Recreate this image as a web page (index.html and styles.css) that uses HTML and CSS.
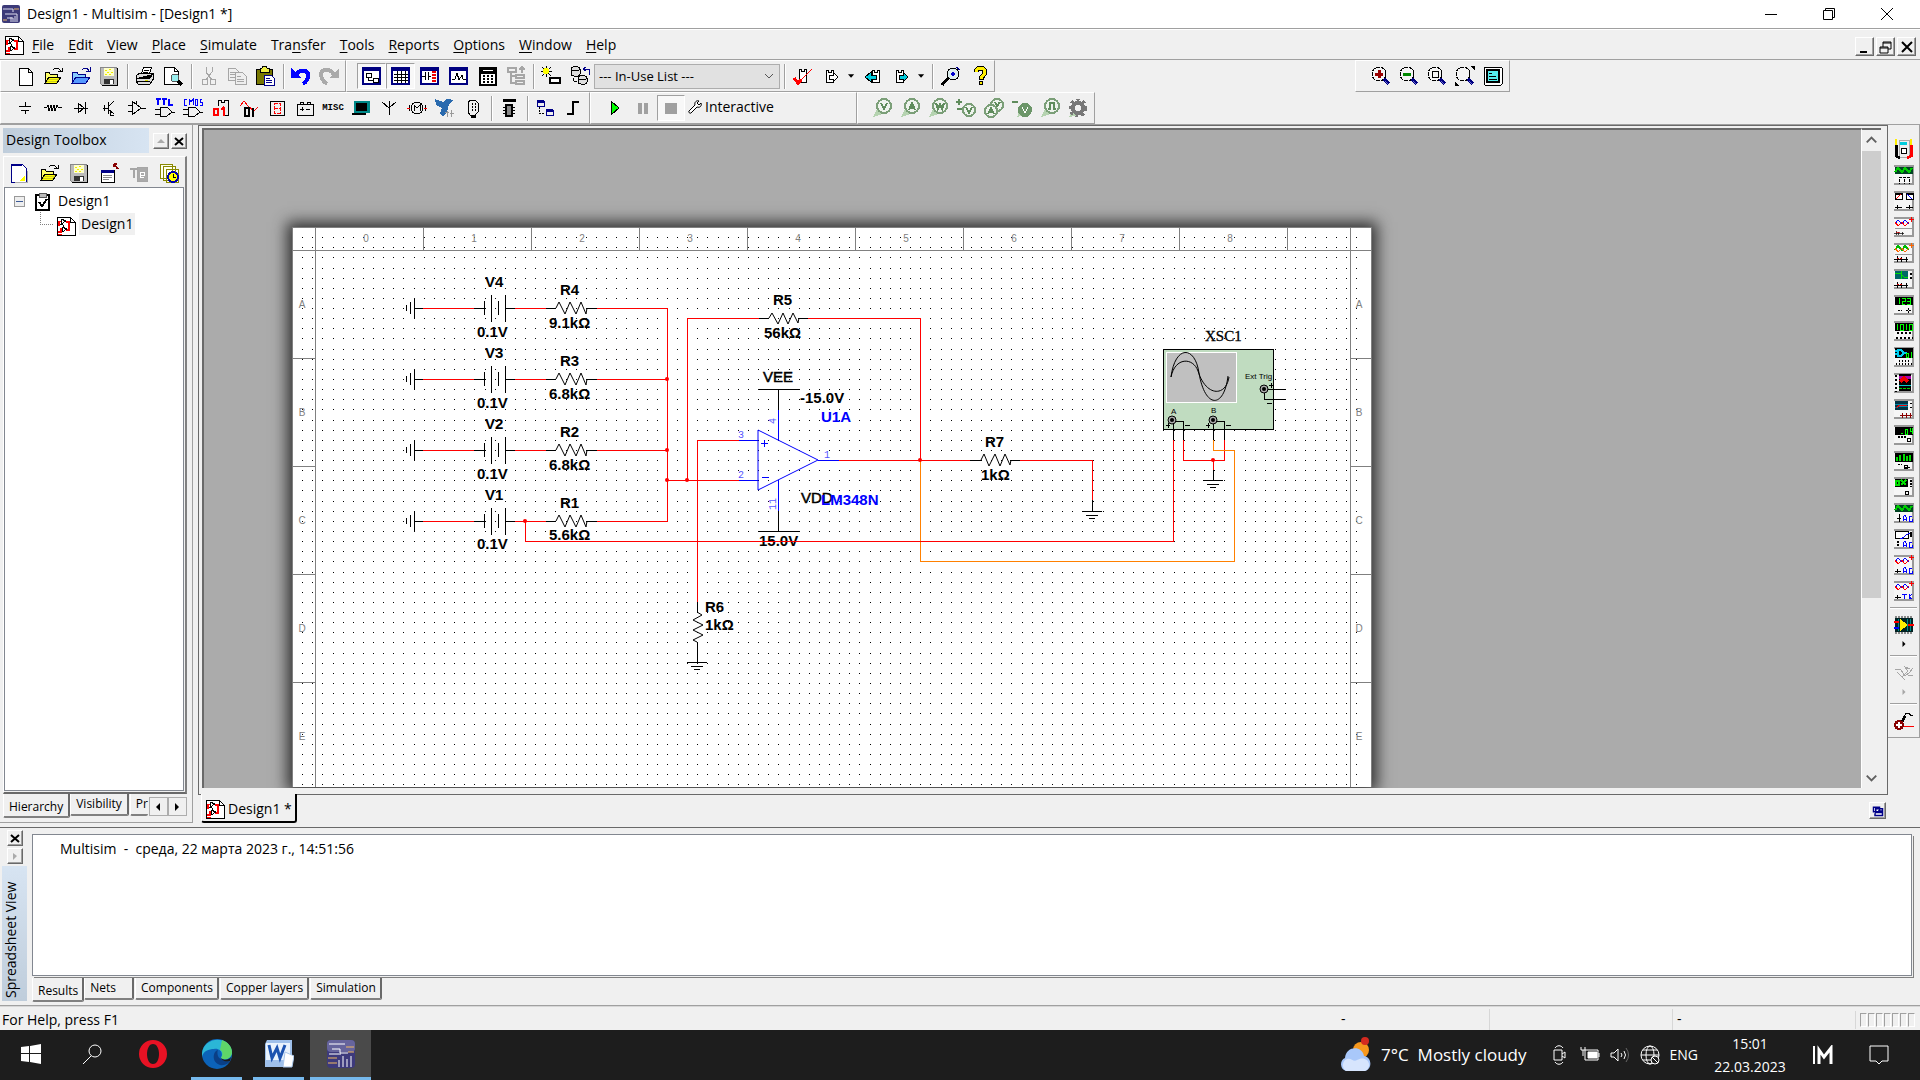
FILE: index.html
```html
<!DOCTYPE html>
<html lang="en">
<head>
    <meta charset="utf-8">
    <title>Design1 - Multisim - [Design1 *]</title>
    <meta name="viewport" content="width=device-width,initial-scale=1">
    <link rel="stylesheet" href="styles.css">
</head>
<body>
    <!-- shared symbols -->
    <svg class="defs" width="0" height="0">
        <defs>
            <symbol id="i-sheet" viewBox="0 0 20 20">
                <path d="M1 1h13l5 5v13H1z" fill="#fff" stroke="#000"/>
                <path d="M14 1v5h5" stroke="#000" fill="none"/>
                <path d="M3 5v5M2 16h3v-4M10 6h3v8h-3" stroke="#f00" fill="none" stroke-width="2"/>
                <path d="M2 5h4M2 18h4" stroke="#f00" fill="none"/>
                <path d="M5 3v5l5-3zM6 11v5l5-3zM4 8h3M7 9v2" stroke="#000" fill="none"/>
            </symbol>
            <symbol id="i-open" viewBox="0 0 20 20">
                <path d="M2 17V6h4l1 2h7v3" fill="#ff6" stroke="#000"/>
                <path d="M2 17l4-6h12l-4 6z" fill="#cc2" stroke="#000"/>
                <path d="M5 14h9M6 12h9M4 16h9" stroke="#ff0"/>
                <path d="M10 4l2-2h3l3 3M15 5h4V2" fill="none" stroke="#000"/>
            </symbol>
            <symbol id="i-save" viewBox="0 0 20 20">
                <path d="M1 1h16l1 2v16H3l-2-2z" fill="#bbb" stroke="#888"/>
                <path d="M18 2v17H3" stroke="#000" fill="none"/>
                <path d="M5 2h10v8H5z" fill="#ffc"/>
                <path d="M6 4h2M10 3h2M8 6h2M12 6h2M6 8h2M10 8h2" stroke="#ee0"/>
                <path d="M5 13h10v5H5z" fill="#333"/><path d="M11 14h3v4h-3z" fill="#fff"/>
            </symbol>
            <symbol id="i-lens" viewBox="0 0 20 20">
                <circle cx="8" cy="8" r="7" fill="#f4f4f4" stroke="#000" stroke-dasharray="4 1"/>
                <path d="M13 13l5 5" stroke="#000080" stroke-width="4"/><path d="M14 15l3 3" stroke="#66c"/>
            </symbol>
            <symbol id="i-probe" viewBox="0 0 20 20">
                <path d="M1 19l4-8 6 5z" fill="#b5d3b0"/>
                <circle cx="12" cy="8" r="7" fill="#eef3ed" stroke="#7b9f78" stroke-width="2"/>
            </symbol>
            <symbol id="i-chip" viewBox="0 0 20 20">
                <path d="M6 3h2v2h3V3h2v13H6z" fill="#fff" stroke="#000"/>
            </symbol>
            <symbol id="i-drop" viewBox="0 0 8 8"><path d="M0 2h7L3.500 6z"/></symbol>

            <!-- instrument faces -->
            <symbol id="m-base" viewBox="0 0 20 20">
                <path d="M0 0h20v20H0z" fill="#f6f6f6"/>
                <path d="M0 1h19v18H0" fill="none" stroke="#999" stroke-width="2"/>
            </symbol>
            <symbol id="m-pins" viewBox="0 0 20 6"><path d="M0 3h14M3 0v6M7 1v5M12 1v5" stroke="#000"/><path d="M3 2h2M6 2h2" stroke="#c00"/></symbol>

            <!-- schematic parts -->
            <g id="src">
                <path d="M-68-3v6M-64-6v12M-60-10v20M-60 0h9M0 0h10M10-7v14M17-13v27M24-7v14M31-13v27M31 0h10M72 0h10M112 0h11" class="blk"/>
                <path d="M-51 0H0M41 0h31M123 0h71" class="red"/>
                <path d="M82 0l3-6 6 12 5-12 6 12 5-12 5 12 1-6" class="blk thin"/>
            </g>
            <g id="gnd"><path d="M-10 0h20M-6 4h12M-3 7h6" class="blk"/></g>
            <g id="jack"><circle r="4" fill="#aaa" stroke="#000"/><circle r="2" fill="#000"/></g>
            <pattern id="grid" x="292" y="228" width="152" height="152" patternUnits="userSpaceOnUse">
                <path class="dots" d="M0 0.500h152M0 10.500h152M0 20.500h152M0 30.500h152M0 41.500h152M0 51.500h152M0 61.500h152M0 71.500h152M0 81.500h152M0 91.500h152M0 101.500h152M0 111.500h152M0 122.500h152M0 132.500h152M0 142.500h152"/>
            </pattern>
        </defs>
    </svg>

    <header class="titlebar">
        <svg class="appicon" viewBox="0 0 18 18"><rect width="18" height="18" rx="2" fill="#3c3a78"/><path d="M1 4h10v3M3 9h12M5 13h6v4M9 12v5M13 11v6M15 9v8" stroke="#dde" fill="none"/><path d="M12 4h5M1 15h4" stroke="#e9b66a"/></svg>
        <span class="caption">Design1 - Multisim - [Design1 *]</span>
        <div class="winbtns">
            <button aria-label="Minimize"><svg viewBox="0 0 14 14"><path d="M1 7.500h12"/></svg></button>
            <button aria-label="Restore"><svg viewBox="0 0 14 14"><path d="M1.500 3.500h9v9h-9zM3.500 3V1.500h9v9H11"/></svg></button>
            <button aria-label="Close"><svg viewBox="0 0 14 14"><path d="M1 1l12 12M13 1L1 13"/></svg></button>
        </div>
    </header>

    <nav class="menubar">
        <svg class="ic"><use href="#i-sheet"/></svg>
        <button><u>F</u>ile</button>
        <button><u>E</u>dit</button>
        <button><u>V</u>iew</button>
        <button><u>P</u>lace</button>
        <button><u>S</u>imulate</button>
        <button>Tra<u>n</u>sfer</button>
        <button><u>T</u>ools</button>
        <button><u>R</u>eports</button>
        <button><u>O</u>ptions</button>
        <button><u>W</u>indow</button>
        <button><u>H</u>elp</button>
        <div class="mdibtns">
            <button class="raised" aria-label="Minimize sheet"><svg viewBox="0 0 16 16"><path d="M3 13h7" stroke-width="2"/></svg></button>
            <button class="raised" aria-label="Restore sheet"><svg viewBox="0 0 16 16"><path d="M2 8h8v6H2zM2 9h8M5 8V3h8v7h-3M5 4h8"/></svg></button>
            <button class="raised" aria-label="Close sheet"><svg viewBox="0 0 16 16"><path d="M3 3l10 10M13 3L3 13" stroke-width="2"/></svg></button>
        </div>
    </nav>

    <div class="toolrow">
        <div class="toolbar first">
            <button aria-label="New"><svg class="ic" viewBox="0 0 20 20"><path d="M4 2h9l4 4v13H4zM13 2v4h4" fill="#fff" stroke="#000"/></svg></button>
            <button aria-label="Open"><svg class="ic"><use href="#i-open"/></svg></button>
            <button aria-label="Open sample"><svg class="ic" viewBox="0 0 20 20"><path d="M1 17V6h5l1 2h7v3" fill="#8cf" stroke="#008"/><path d="M1 17l4-6h14l-4 6z" fill="#59f" stroke="#008"/><path d="M11 4l2-2h3l2 3M15 5h4V1" fill="none" stroke="#008"/></svg></button>
            <button aria-label="Save"><svg class="ic"><use href="#i-save"/></svg></button>
            <i class="sep"></i>
            <button aria-label="Print"><svg class="ic" viewBox="0 0 20 20"><path d="M6 8l3-7h8l-3 7z" fill="#fff" stroke="#000"/><path d="M9 4h5M8 6h5" stroke="#000"/><path d="M1 10l4-3h13l1 5-4 6H3l-2-3z" fill="#ddd" stroke="#000"/><path d="M2 12h13l3-4M2 15h13M3 18h12" stroke="#000"/><path d="M10 14h3" stroke="#dd0"/></svg></button>
            <button aria-label="Print preview"><svg class="ic" viewBox="0 0 20 20"><path d="M1 1h10l4 4v13H1z" fill="#fff" stroke="#000"/><path d="M11 1v4h4" stroke="#000" fill="none"/><circle cx="12" cy="12" r="4" fill="#9ee" stroke="#555"/><path d="M15 15l4 4" stroke="#000" stroke-width="3"/></svg></button>
            <i class="sep"></i>
            <button aria-label="Cut"><svg class="ic gray" viewBox="0 0 20 20"><path d="M7 1v5l6 8M13 1v5l-6 8"/><circle cx="6" cy="16" r="3"/><circle cx="14" cy="16" r="3"/></svg></button>
            <button aria-label="Copy"><svg class="ic gray" viewBox="0 0 20 20"><path d="M1 2h7l3 3v9H1zM3 6h5M3 8h5M3 11h5"/><path d="M8 6h7l4 4v8H8z" fill="#eee"/><path d="M10 10h4M10 13h7M10 15h7"/></svg></button>
            <button aria-label="Paste"><svg class="ic" viewBox="0 0 20 20"><path d="M1 3h16v15H1z" fill="#770" stroke="#000"/><path d="M5 2h2l1-2h3l1 2h2v4H5z" fill="#ee4" stroke="#000"/><path d="M9 9h7l3 3v7H9z" fill="#fff" stroke="#008"/><path d="M11 12h4M11 14h6M11 16h6" stroke="#008"/></svg></button>
            <i class="sep"></i>
            <button aria-label="Undo"><svg class="ic" viewBox="0 0 20 20"><path d="M4 10c3-6 12-7 13-2 1 4-1 7-5 10" fill="none" stroke="#00f" stroke-width="4"/><path d="M0 2v10h10z" fill="#00f"/></svg></button>
            <button aria-label="Redo"><svg class="ic" viewBox="0 0 20 20"><path d="M15 9C12 2 3 3 2 8c0 4 2 7 6 10" fill="none" stroke="#aaa" stroke-width="4"/><path d="M20 2v10H10z" fill="#aaa"/></svg></button>
        </div>
        <div class="toolbar views">
            <button class="on" aria-label="Design toolbox"><svg class="ic navy" viewBox="0 0 20 20"><path d="M1 2h17v16H1z" stroke-width="2"/><path d="M1 3h17" stroke-width="3"/><path d="M4 7h5v4H4zM11 12h5v4h-5zM6 11v3h5" stroke="#000"/></svg></button>
            <button class="on" aria-label="Spreadsheet view"><svg class="ic navy" viewBox="0 0 20 20"><path d="M1 2h17v16H1z" stroke-width="2"/><path d="M1 3h17" stroke-width="3"/><path d="M6 5v12M10 5v12M14 5v12M3 8h14M3 11h14M3 14h14" stroke="#000"/></svg></button>
            <button aria-label="SPICE netlist"><svg class="ic navy" viewBox="0 0 20 20"><path d="M1 2h17v16H1z" stroke-width="2"/><path d="M1 3h17" stroke-width="3"/><path d="M2 10h3M5 6v8M8 6v8M8 10h3" stroke="#000"/><path d="M14 5v12" stroke="#e00" stroke-width="4" stroke-dasharray="2 1"/></svg></button>
            <button aria-label="Grapher"><svg class="ic navy" viewBox="0 0 20 20"><path d="M1 2h17v16H1z" stroke-width="2"/><path d="M1 3h17" stroke-width="3"/><path d="M3 13h3l2-6 2 7 3-5 1 4h3" stroke="#000"/></svg></button>
            <button aria-label="Postprocessor"><svg class="ic" viewBox="0 0 20 20"><path d="M2 2h16v17H2z" fill="#fff" stroke="#000" stroke-width="2"/><path d="M2 5h16" stroke="#000" stroke-width="5"/><path d="M5 5l3-1 3 1 4-1" stroke="#fff" fill="none"/><path d="M5 10h11M5 13h11M5 16h11" stroke="#000" stroke-width="2" stroke-dasharray="2 2"/></svg></button>
            <button aria-label="Hierarchy"><svg class="ic gray" viewBox="0 0 20 20"><path d="M1 2h8v4H1zM9 9h8v3H9zM9 15h8v3H9zM4 6v11h5M4 10h5M15 7V3M12 4l3-3 3 3" stroke-width="2"/></svg></button>
            <i class="sep"></i>
            <button aria-label="Create component"><svg class="ic" viewBox="0 0 20 20"><path d="M0 5h11M5 0v11M1 1l9 9M10 1l-9 9" stroke="#000"/><circle cx="5" cy="5" r="3" fill="#ff0"/><path d="M9 12h10v5H9z" fill="#fff" stroke="#000" stroke-width="2"/></svg></button>
            <button aria-label="Database manager"><svg class="ic" viewBox="0 0 20 20"><path d="M1 3v5c1 3 9 3 9 0V3c0-3-9-3-9 0 1 2 9 2 9 0M8 12v4c1 3 9 3 9 0v-4c0-3-9-3-9 0 1 2 9 2 9 0" fill="#ddd" stroke="#000"/><path d="M3 12c0 3 2 4 4 4" stroke="#000" fill="none"/><path d="M14 3h5v6M16 1l-3 2 3 2" stroke="#008" fill="none"/></svg></button>
            <select class="inuse" aria-label="In-Use List"><option>--- In-Use List ---</option></select>
            <i class="sep"></i>
            <button aria-label="Rules check"><svg class="ic" viewBox="0 0 20 20"><use href="#i-chip"/><path d="M1 12l4 5L19 3" fill="none" stroke="#f00"/><path d="M1 12l4 5 3-3" fill="none" stroke="#f00" stroke-width="3"/></svg></button>
            <button aria-label="Transfer"><svg class="ic" viewBox="0 0 20 20"><path d="M4 4h2v2h3V4h2v12H4z" fill="#fff" stroke="#000"/><path d="M7 9h4V6l5 5-5 5v-3H7z" fill="#fff" stroke="#000"/></svg></button>
            <svg class="drop"><use href="#i-drop"/></svg>
            <button aria-label="Backannotate"><svg class="ic" viewBox="0 0 20 20"><path d="M9 4h2v2h3V4h2v12H9z" fill="#fff" stroke="#000"/><path d="M13 9H8V6l-6 5 6 5v-3h5z" fill="#0cd" stroke="#000"/></svg></button>
            <button aria-label="Forward annotate"><svg class="ic" viewBox="0 0 20 20"><path d="M4 4h2v2h3V4h2v12H4z" fill="#fff" stroke="#000"/><path d="M7 9h4V6l5 5-5 5v-3H7z" fill="#0cd" stroke="#000"/></svg></button>
            <svg class="drop"><use href="#i-drop"/></svg>
            <i class="sep"></i>
            <button aria-label="Find examples"><svg class="ic" viewBox="0 0 20 20"><path d="M1 19l7-8" stroke="#000" stroke-width="3"/><circle cx="12" cy="8" r="6" fill="#dee" stroke="#000"/><path d="M12 5l2 3-2 3-3-3z" fill="#00c"/><path d="M15 1l4 3" stroke="#008"/></svg></button>
            <button aria-label="Help"><svg class="ic" viewBox="0 0 20 20"><path d="M6 6c0-5 9-5 9 0 0 4-4 3-4 8" fill="none" stroke="#000" stroke-width="5"/><path d="M6 6c0-5 9-5 9 0 0 4-4 3-4 7" fill="none" stroke="#fe0" stroke-width="3"/><circle cx="11" cy="17" r="2" fill="#fe0" stroke="#000"/></svg></button>
        </div>
        <div class="toolbar zoombar">
            <button aria-label="Zoom in"><svg class="ic" viewBox="0 0 20 20"><use href="#i-lens"/><path d="M4 8h8M8 4v8" stroke="#900" stroke-width="3"/></svg></button>
            <button aria-label="Zoom out"><svg class="ic" viewBox="0 0 20 20"><use href="#i-lens"/><path d="M4 8h8" stroke="#080" stroke-width="3"/></svg></button>
            <button aria-label="Zoom area"><svg class="ic" viewBox="0 0 20 20"><use href="#i-lens"/><path d="M5 5h6v6H5z" stroke="#000" fill="none"/></svg></button>
            <button aria-label="Zoom sheet"><svg class="ic" viewBox="0 0 20 20"><use href="#i-lens"/><path d="M15 0h5v4zM0 15v5h4z"/></svg></button>
            <button aria-label="Full screen"><svg class="ic" viewBox="0 0 20 20"><rect x="1" y="1" width="18" height="18" rx="1" fill="#fff" stroke="#000"/><path d="M4 4h12v12H4z" fill="#5ee" stroke="#000" stroke-width="2"/><path d="M6 7h3M6 10h7M6 13h8" stroke="#000"/></svg></button>
        </div>
    </div>

    <div class="toolrow second">
        <div class="toolbar first">
            <button aria-label="Source"><svg class="ic line" viewBox="0 0 20 20"><path d="M10 4v4M4 8h12M6 12h8M10 12v4"/></svg></button>
            <button aria-label="Basic"><svg class="ic line" viewBox="0 0 20 20"><path d="M1 9h3l1-2 1 6 2-6 1 6 2-6 1 6 2-6 1 2h4"/></svg></button>
            <button aria-label="Diode"><svg class="ic line" viewBox="0 0 20 20"><path d="M3 10h14M7 5v10l6-5zM14 4v12"/></svg></button>
            <button aria-label="Transistor"><svg class="ic line" viewBox="0 0 20 20"><path d="M4 10h5M9 4v12M9 9l6-6M9 11l6 5M11 12v5h4M5 7v6"/></svg></button>
            <button aria-label="Analog"><svg class="ic line" viewBox="0 0 20 20"><path d="M5 3v14l9-7zM1 7h4M1 13h4M14 10h5M9 3v4"/></svg></button>
            <button aria-label="TTL"><svg class="ic line" viewBox="0 0 20 20"><path d="M1 1h5M3 1v6M7 1h5M9 1v6M14 1v6h4" stroke="#00f" stroke-width="2"/><path d="M5 9v9h7l5-4-5-5zM0 11h5M0 16h5M17 14h3"/></svg></button>
            <button aria-label="CMOS"><svg class="ic line" viewBox="0 0 20 20"><path d="M4 1H1v6h3M6 7V1l2 3 2-3v6M12 1h2v6h-2zM19 1h-2v3h2v3h-2" stroke="#00f"/><path d="M5 9v9h7l5-4-5-5zM0 11h5M0 16h5M17 14h3"/></svg></button>
            <button aria-label="Miscellaneous digital"><svg class="ic line" viewBox="0 0 20 20"><path d="M7 8V2h3v2h3V2h4v15h-4"/><path d="M3 11h4v6H3zM7 10v8M13 9v9M10 12l3-3" stroke="#f00" stroke-width="2"/></svg></button>
            <button aria-label="Mixed"><svg class="ic line" viewBox="0 0 20 20"><path d="M1 8l4-5 4 5 6 5 4-4" stroke="#f00"/><path d="M6 10h4v8H6zM14 10v9" stroke-width="2"/></svg></button>
            <button aria-label="Indicator"><svg class="ic line" viewBox="0 0 20 20"><path d="M3 3h14v14H3z"/><path d="M7 5h6v10H7zM7 10h6" stroke="#f00" stroke-dasharray="4 1"/></svg></button>
            <button aria-label="Power"><svg class="ic line" viewBox="0 0 20 20"><path d="M2 6h16v11H2zM5 6V4h3v2M12 6V4h3v2M5 11h4M7 9v4M11 11h4"/></svg></button>
            <button aria-label="Misc" class="misc">MISC</button>
            <button aria-label="Advanced peripherals"><svg class="ic" viewBox="0 0 20 20"><path d="M3 3h16v12H3z" fill="#088"/><path d="M5 5h11v8H5z"/><path d="M1 15h14v2H1z"/></svg></button>
            <button aria-label="RF"><svg class="ic line" viewBox="0 0 20 20"><path d="M3 4l7 6 7-6M10 3v14"/></svg></button>
            <button aria-label="Electromechanical"><svg class="ic line" viewBox="0 0 20 20"><circle cx="10" cy="10" r="6"/><path d="M7 13V7l3 3 3-3v6M2 7v6M18 7v6"/><path d="M0 10h3M17 10h3" stroke="#f00"/></svg></button>
            <button aria-label="NI component"><svg class="ic" viewBox="0 0 20 20"><path d="M0 1l8 3 4-3 7 1-5 4-2 8-4 5-3-4 2-5-6-3z" fill="#2a6aae"/><path d="M12 13v6M10 14h4M16 12v7M15 15h4" stroke="#999"/></svg></button>
            <button aria-label="Connector"><svg class="ic line" viewBox="0 0 20 20"><path d="M7 2h5l3 3v9l-3 3H7l-2-3V5z"/><path d="M9 5v9M12 5v9" stroke-dasharray="2 1"/><path d="M8 18h5" stroke-width="3"/></svg></button>
            <i class="sep"></i>
            <button aria-label="MCU"><svg class="ic" viewBox="0 0 20 20"><path d="M4 2h13" stroke="#000" stroke-width="3"/><path d="M7 7h6v11H7z" fill="#888" stroke="#000" stroke-width="2"/><path d="M4 9h2M4 12h2M4 15h2M14 9h2M14 12h2M14 15h2" stroke="#000"/></svg></button>
            <i class="sep"></i>
            <button aria-label="Hierarchical block"><svg class="ic line" viewBox="0 0 20 20"><path d="M2 3h7v5H2zM11 12h7v5h-7z" stroke="#008"/><path d="M2 3h7M11 12h7" stroke="#008" stroke-width="3"/><path d="M4 9v6h6" stroke-dasharray="2 1"/></svg></button>
            <button aria-label="Bus"><svg class="ic line" viewBox="0 0 20 20"><path d="M4 16h6V4h6" stroke-width="2"/></svg></button>
        </div>
        <div class="toolbar sim">
            <button aria-label="Run"><svg class="ic" viewBox="0 0 20 20"><path d="M6 3l8 7-8 7z" fill="#0f0" stroke="#000"/></svg></button>
            <button aria-label="Pause"><svg class="ic" viewBox="0 0 20 20"><path d="M5 5h4v11H5zM11 5h4v11h-4z" fill="#a0a0a0"/></svg></button>
            <button class="on" aria-label="Stop"><svg class="ic" viewBox="0 0 20 20"><path d="M4 5h12v11H4z" fill="#a0a0a0"/></svg></button>
            <button class="mode"><svg viewBox="0 0 14 14"><path d="M1 11l6-6c-1-3 2-5 4-4L9 3l2 2 2-2c1 3-1 5-4 4l-6 6c-1 1-3-1-2-2z" fill="#fff" stroke="#000"/></svg>Interactive</button>
        </div>
        <div class="toolbar probes">
            <button aria-label="Voltage probe"><svg class="ic" viewBox="0 0 20 20"><use href="#i-probe"/><path d="M9 5l3 6 3-6" class="gl"/></svg></button>
            <button aria-label="Current probe"><svg class="ic" viewBox="0 0 20 20"><use href="#i-probe"/><path d="M9 12l3-7 3 7M10 10h4" class="gl"/></svg></button>
            <button aria-label="Power probe"><svg class="ic" viewBox="0 0 20 20"><use href="#i-probe"/><path d="M8 5l2 6 2-5 2 5 2-6" class="gl"/></svg></button>
            <button aria-label="Differential probe"><svg class="ic" viewBox="0 0 20 20"><path d="M0 4h6M3 1v6M1 11h5" class="gl"/><circle cx="13" cy="12" r="6" fill="#eef3ed" stroke="#7b9f78" stroke-width="2"/><path d="M10 9l3 6 3-6" class="gl"/></svg></button>
            <button aria-label="Voltage and current probe"><svg class="ic" viewBox="0 0 20 20"><circle cx="13" cy="7" r="6" fill="#eef3ed" stroke="#7b9f78" stroke-width="2"/><path d="M11 4l2 4 3-4" class="gl"/><circle cx="7" cy="13" r="6" fill="#eef3ed" stroke="#7b9f78" stroke-width="2"/><path d="M4 16l3-6 3 6M5 14h4" class="gl"/></svg></button>
            <button aria-label="Reference probe"><svg class="ic" viewBox="0 0 20 20"><path d="M0 4h6" class="gl"/><path d="M5 19l3-7 5 5z" fill="#b5d3b0"/><circle cx="13" cy="12" r="7" fill="#6c9669"/><path d="M10 9l3 6 3-6" stroke="#fff" fill="none"/></svg></button>
            <button aria-label="Digital probe"><svg class="ic" viewBox="0 0 20 20"><use href="#i-probe"/><path d="M8 11h2V5h4v6h2" class="gl"/></svg></button>
            <button aria-label="Probe settings"><svg class="ic" viewBox="0 0 20 20"><path d="M1 19l4-7 6 5z" fill="#b5d3b0"/><circle cx="10" cy="10" r="5" fill="none" stroke="#777" stroke-width="4"/><circle cx="10" cy="10" r="8" fill="none" stroke="#777" stroke-width="3" stroke-dasharray="3 3"/></svg></button>
        </div>
    </div>

    <main class="main">
        <aside class="dock">
            <div class="dockhead">
                <h2>Design Toolbox</h2>
                <button class="raised" aria-label="Collapse"><svg viewBox="0 0 12 12"><path d="M2 8h8L6 4z" fill="#aaa"/></svg></button>
                <button class="raised" aria-label="Close toolbox"><svg viewBox="0 0 12 12"><path d="M2 3l8 7M10 3l-8 7" stroke="#000" stroke-width="2"/></svg></button>
            </div>
            <div class="dockbody">
                <div class="docktools">
                    <button aria-label="New design"><svg class="ic" viewBox="0 0 20 20"><path d="M2 1h11l4 4v14H2z" fill="#fff" stroke="#008"/><path d="M2 2h11" stroke="#008" stroke-width="2"/><path d="M18 8v11H6" stroke="#aaa" fill="none"/><path d="M16 12v6h-5z" fill="#ff0"/></svg></button>
                    <button aria-label="Open design"><svg class="ic"><use href="#i-open"/></svg></button>
                    <button aria-label="Save design"><svg class="ic"><use href="#i-save"/></svg></button>
                    <button aria-label="Close design"><svg class="ic" viewBox="0 0 20 20"><path d="M2 7h13v12H2z" fill="#fff" stroke="#000"/><path d="M2 8h13" stroke="#008" stroke-width="3"/><path d="M4 12h9M4 14h9M4 16h6" stroke="#888"/><path d="M15 1l4 5M15 1h3M15 1v3" stroke="#800" stroke-width="2"/></svg></button>
                    <button aria-label="Rename"><svg class="ic gray" viewBox="0 0 20 20"><path d="M1 6h8M5 6v9" stroke-width="2"/><path d="M8 4h10v14H8z" fill="#aaa"/><path d="M15 14h-4V9h4v3h-4" stroke="#fff"/></svg></button>
                    <button aria-label="Versions"><svg class="ic" viewBox="0 0 20 20"><path d="M1 1h12v14H1zM4 3h12v14H4zM7 6h12v13H7z" fill="#ffe" stroke="#880"/><circle cx="14" cy="14" r="5" fill="#ff0" stroke="#00a" stroke-width="2"/><path d="M14 11v3h3" stroke="#000" fill="none"/></svg></button>
                </div>
                <ul class="tree">
                    <li><span class="minus"></span><svg class="ic" viewBox="0 0 20 20"><path d="M3 3h13v15H3z" fill="#fff" stroke="#000" stroke-width="2"/><path d="M6 1h7v4H6z" fill="#bbb" stroke="#555"/><path d="M6 10l3 4 5-7" stroke="#000" stroke-width="2" fill="none"/></svg>Design1
                        <ul><li><svg class="ic"><use href="#i-sheet"/></svg><span class="sel">Design1</span></li></ul>
                    </li>
                </ul>
            </div>
            <div class="tabs docktabs">
                <button class="tab active">Hierarchy</button>
                <button class="tab">Visibility</button>
                <button class="tab cut">Pr</button>
                <button class="arrow" aria-label="Scroll left"><svg viewBox="0 0 8 8"><path d="M6 0v8L2 4z"/></svg></button>
                <button class="arrow" aria-label="Scroll right"><svg viewBox="0 0 8 8"><path d="M2 0v8l4-4z"/></svg></button>
            </div>
        </aside>

        <section class="work">
            <div class="frame">
                <div class="canvas">
                    <svg class="sheet" viewBox="292 228 1080 560">
                        <rect x="292" y="228" width="1080" height="560" fill="#fff"/>
                        <rect x="302" y="238" width="1064" height="550" fill="url(#grid)"/>
                        <path class="ruler" d="M292 228h1080M292 228v560M315 228v560M1350 228v560M1371 228v560M292 251h1080M423 228v23M531 228v23M639 228v23M747 228v23M855 228v23M963 228v23M1071 228v23M1179 228v23M1287 228v23M292 359h23M292 467h23M292 575h23M292 683h23M1350 359h22M1350 467h22M1350 575h22M1350 683h22"/>
                        <g class="marks">
                            <text x="366" y="243">0</text><text x="474" y="243">1</text><text x="582" y="243">2</text><text x="690" y="243">3</text><text x="798" y="243">4</text><text x="906" y="243">5</text><text x="1014" y="243">6</text><text x="1122" y="243">7</text><text x="1230" y="243">8</text>
                            <text x="302" y="309">A</text><text x="302" y="417">B</text><text x="302" y="525">C</text><text x="302" y="633">D</text><text x="302" y="741">E</text>
                            <text x="1359" y="309">A</text><text x="1359" y="417">B</text><text x="1359" y="525">C</text><text x="1359" y="633">D</text><text x="1359" y="741">E</text>
                        </g>

                        <use href="#src" x="474" y="309"/>
                        <use href="#src" x="474" y="380"/>
                        <use href="#src" x="474" y="451"/>
                        <use href="#src" x="474" y="522"/>

                        <!-- nets -->
                        <path class="red" d="M667 309v213M667 481h72M687 481V319h72M808 319h112v142M839 461h131M1020 461h72v40M739 441h-42v162M525 522v20h648V441M1183 441v20h41v-20M1213 461v10"/>
                        <path class="orange" d="M920 461v101h314V451h-21v-10"/>
                        <g fill="#f00"><circle cx="667" cy="380" r="2"/><circle cx="667" cy="451" r="2"/><circle cx="667" cy="481" r="2"/><circle cx="687" cy="481" r="2"/><circle cx="525" cy="522" r="2"/><circle cx="920" cy="461" r="2"/><circle cx="1213" cy="461" r="2"/></g>

                        <!-- R5, R7, R6 -->
                        <path class="blk" d="M759 319h10M798 319h10M970 461h11M1010 461h10M1092 501v11M697 603v10M697 643v20M1213 471v10"/>
                        <path class="blk thin" d="M769 319l3-5 6 11 5-11 5 11 5-11 5 10 1-5M981 461l3-6 5 12 6-12 5 12 5-12 5 11 1-5M697 613l5 3-9 5 10 5-10 5 10 5-10 5 4 2"/>
                        <use href="#gnd" x="1092" y="512"/>
                        <use href="#gnd" x="697" y="663"/>
                        <use href="#gnd" x="1213" y="481"/>

                        <!-- op amp -->
                        <path class="blk" d="M758 390h41M778 390v21M778 512v20M758 532h41"/>
                        <path class="blue" d="M739 441h19M739 481h19M818 461h21M778 411v30M778 481v31M761 444h7M764 441v7M762 478h7"/>
                        <path class="blue thin" d="M758 431v60l60-30z"/>
                        <g class="pin"><text x="738" y="439">3</text><text x="738" y="479">2</text><text x="824" y="459">1</text><text transform="translate(776 425) rotate(-90)">4</text><text transform="translate(776 511) rotate(-90)">11</text></g>

                        <g class="lbl">
                            <text x="485" y="288">V4</text><text x="485" y="359">V3</text><text x="485" y="430">V2</text><text x="485" y="501">V1</text>
                            <text x="477" y="338">0.1V</text><text x="477" y="409">0.1V</text><text x="477" y="480">0.1V</text><text x="477" y="550">0.1V</text>
                            <text x="560" y="296">R4</text><text x="560" y="367">R3</text><text x="560" y="438">R2</text><text x="560" y="509">R1</text>
                            <text x="549" y="329">9.1kΩ</text><text x="549" y="400">6.8kΩ</text><text x="549" y="471">6.8kΩ</text><text x="549" y="541">5.6kΩ</text>
                            <text x="773" y="306">R5</text><text x="764" y="339">56kΩ</text>
                            <text x="763" y="383" class="net">VEE</text><text x="800" y="404">-15.0V</text>
                            <text x="801" y="504" class="net">VDD</text><text x="759" y="547">15.0V</text>
                            <text x="821" y="423" class="part">U1A</text><text x="821" y="506" class="part">LM348N</text>
                            <text x="985" y="448">R7</text><text x="981" y="481">1kΩ</text>
                            <text x="705" y="613">R6</text><text x="705" y="631">1kΩ</text>
                        </g>
                        <path class="red" d="M525 542h648"/>

                        <!-- oscilloscope -->
                        <text x="1205" y="342" class="xsc">XSC1</text>
                        <rect x="1163" y="350" width="110" height="80" fill="#c0dcc0" stroke="#000" shape-rendering="crispEdges"/>
                        <rect x="1166" y="353" width="70" height="50" fill="#c0c0c0" stroke="#fff" shape-rendering="crispEdges"/>
                        <path class="blk thin" d="M1171 378c4-32 24-32 28-4 6 36 25 36 29 3M1171 378c4-20 22-20 27-6 8 26 28 26 31 6"/>
                        <path class="blk" d="M1173 422v19M1173 422h10v19M1213 422v19M1213 422h11v19M1264 390h21M1264 390v10h21M1166 426h4M1168 424v5M1185 426h5M1206 426h4M1208 424v5M1226 426h5M1269 386h4M1271 384v5M1267 404h5"/>
                        <use href="#jack" x="1172" y="421"/>
                        <use href="#jack" x="1213" y="421"/>
                        <use href="#jack" x="1264" y="390"/>
                        <g class="tiny"><text x="1171" y="415">A</text><text x="1211" y="414">B</text><text x="1245" y="380">Ext Trig</text></g>
                    </svg>
                </div>
                <div class="vscroll">
                    <svg viewBox="0 0 20 20"><path d="M5 12l5-5 5 5"/></svg>
                    <div class="thumb"></div>
                    <svg class="down" viewBox="0 0 20 20"><path d="M5 8l5 5 5-5"/></svg>
                </div>
            </div>
            <div class="doctabs">
                <button class="doctab"><svg class="ic"><use href="#i-sheet"/></svg>Design1 *</button>
                <button class="raised cascade" aria-label="Cascade"><svg viewBox="0 0 16 16"><path d="M2 3h8v6H2zM5 5h9v5H5zM8 8h6v6H4v-3" fill="#fff" stroke="#008" stroke-width="2"/></svg></button>
            </div>
        </section>

        <aside class="instruments">
            <button aria-label="Multimeter"><svg class="ic" viewBox="0 0 20 20"><path d="M5 1h10v17H5z" fill="#eee" stroke="#aaa"/><path d="M6 3h7v3H6z" fill="#0cd"/><circle cx="10" cy="12" r="3" fill="#fff" stroke="#000"/><path d="M2 0v6M17 0v6" stroke="#fe0" stroke-width="2"/><path d="M2 6v11l4 2" stroke="#000" stroke-width="3" fill="none"/><path d="M17 6v11l-4 2" stroke="#f00" stroke-width="3" fill="none"/></svg></button>
            <button aria-label="Function generator"><svg class="ic" viewBox="0 0 20 20"><use href="#m-base"/><path d="M1 2h18v7H1z" fill="#042"/><path d="M1 7l3-4 4 4 3-4 4 4 3-4" stroke="#0c0" stroke-width="2" fill="none"/><path d="M5 12h11M5 14v5M10 14v5M15 14v5" stroke="#000" stroke-dasharray="3 1"/></svg></button>
            <button aria-label="Wattmeter"><svg class="ic" viewBox="0 0 20 20"><use href="#m-base"/><path d="M1 2h7v6H1zM12 2h7v6h-7z" fill="#fff" stroke="#000"/><path d="M1 3h7M12 3h7" stroke="#000" stroke-width="2"/><path d="M2 8l5-5" stroke="#f00"/><path d="M13 3l5 5" stroke="#00f"/><path d="M1 16h7M12 16h7M3 14v4M15 14v4" stroke="#000"/></svg></button>
            <button aria-label="Oscilloscope"><svg class="ic" viewBox="0 0 20 20"><use href="#m-base"/><path d="M1 7l3-4 4 4 3-4 4 4" stroke="#00f" fill="none"/><path d="M1 5l3 4 4-4 3 4 4-4M15 2h5M17 0v5" stroke="#f00" fill="none"/><path d="M1 11h18" stroke="#999"/><use href="#m-pins" y="13" width="14" height="6"/></svg></button>
            <button aria-label="Four channel oscilloscope"><svg class="ic" viewBox="0 0 20 20"><use href="#m-base"/><path d="M1 7l3-4 4 4 3-4 4 4" stroke="#0b0" fill="none" stroke-width="2"/><path d="M1 5l3 4 4-4 3 4 4-4M15 2h5M17 0v5" stroke="#f60" fill="none"/><path d="M1 11h18" stroke="#999"/><use href="#m-pins" y="13" width="20" height="6"/></svg></button>
            <button aria-label="Bode plotter"><svg class="ic" viewBox="0 0 20 20"><use href="#m-base"/><path d="M1 2h13v8H1z" fill="#066"/><path d="M1 4h5l4 4h4M7 2v8" stroke="#0d0" fill="none"/><path d="M17 4v6" stroke="#000" stroke-width="2" stroke-dasharray="2 2"/><use href="#m-pins" y="13" width="20" height="6"/></svg></button>
            <button aria-label="Frequency counter"><svg class="ic" viewBox="0 0 20 20"><use href="#m-base"/><path d="M1 2h18v8H1z"/><path d="M5 3v6M8 3h3v3H8v3h3M13 3h3v6h-3M13 6h3" stroke="#0f0" fill="none"/><path d="M4 15h4M12 15h5M14 13v5" stroke="#000" stroke-dasharray="2 1"/></svg></button>
            <button aria-label="Word generator"><svg class="ic" viewBox="0 0 20 20"><use href="#m-base"/><path d="M1 2h18v8H1z"/><path d="M3 3v6M6 3h3v6H6zM12 3v6M15 3h3v6h-3z" stroke="#0f0" fill="none"/><path d="M3 12h14M2 17h17" stroke="#000" stroke-width="2" stroke-dasharray="2 2"/></svg></button>
            <button aria-label="Logic converter"><svg class="ic" viewBox="0 0 20 20"><use href="#m-base"/><path d="M1 1h18v10H1z"/><path d="M1 4h3M1 7h3M4 3v6h3l3-3-3-3zM10 6h3" stroke="#0ce" stroke-width="2" fill="none"/><path d="M12 6h2v4h-2zM17 5v6" stroke="#0f0" fill="none"/><path d="M5 14h12M2 17h17" stroke="#000" stroke-width="2" stroke-dasharray="1 2"/></svg></button>
            <button aria-label="Logic analyzer"><svg class="ic" viewBox="0 0 20 20"><use href="#m-base"/><path d="M2 2v17" stroke="#000" stroke-width="2" stroke-dasharray="2 2"/><path d="M5 1h12v17H5z"/><path d="M5 4h12" stroke="#a0a" stroke-width="3"/><path d="M6 9l4-4 4 4" stroke="#e00" stroke-width="3" fill="none"/><path d="M5 12h12" stroke="#0cc"/><path d="M5 15h12" stroke="#0c0" stroke-dasharray="3 1"/></svg></button>
            <button aria-label="IV analyzer"><svg class="ic" viewBox="0 0 20 20"><use href="#m-base"/><path d="M1 2h13v9H1z" fill="#034"/><path d="M1 5h13M1 9l5-2h8" stroke="#08a" fill="none"/><path d="M2 9l4-3h7" stroke="#e00" fill="none"/><path d="M16 4h2M16 8h2" stroke="#000"/><path d="M6 16h12M8 14v5M12 14v5M16 14v5" stroke="#800"/></svg></button>
            <button aria-label="Distortion analyzer"><svg class="ic" viewBox="0 0 20 20"><use href="#m-base"/><path d="M1 2h18v8H1z"/><path d="M7 8h2M11 4h2v5h-2zM16 3v3h3M18 3v6" stroke="#0f0" fill="none"/><path d="M4 12h8" stroke="#000" stroke-width="2" stroke-dasharray="2 1"/><circle cx="15" cy="15" r="2" fill="none" stroke="#000"/></svg></button>
            <button aria-label="Spectrum analyzer"><svg class="ic" viewBox="0 0 20 20"><use href="#m-base"/><path d="M1 2h18v9H1z"/><path d="M3 10V6M6 10V4M10 10V3M13 10V5M16 10V4" stroke="#0d0" stroke-width="2"/><path d="M4 13h4M11 16h6" stroke="#000" stroke-dasharray="2 1"/><circle cx="12" cy="16" r="2" fill="none" stroke="#000"/></svg></button>
            <button aria-label="Network analyzer"><svg class="ic" viewBox="0 0 20 20"><use href="#m-base"/><path d="M1 2h13v8H1z"/><path d="M2 4h3v4H2zM7 3l5 5M12 3L7 8" stroke="#0d0" stroke-width="2" fill="none"/><path d="M17 3v7" stroke="#000" stroke-width="2" stroke-dasharray="2 1"/><circle cx="13" cy="16" r="2" fill="none" stroke="#000"/></svg></button>
            <button aria-label="Agilent function generator"><svg class="ic" viewBox="0 0 20 20"><use href="#m-base"/><path d="M1 2h18v7H1z" fill="#042"/><path d="M1 7l3-4 4 4 3-4 4 4 3-4" stroke="#0c0" stroke-width="2" fill="none"/><path d="M5 11v8M3 15h4" stroke="#000"/><path d="M9 18v-4l2-2 1 2v4M9 16h3M18 13h-3v5h3v-2" stroke="#00f" fill="none"/></svg></button>
            <button aria-label="Agilent multimeter"><svg class="ic" viewBox="0 0 20 20"><use href="#m-base"/><path d="M1 2h13v7H1z" fill="#fff" stroke="#000"/><path d="M6 10c5 0 4-6 12-6" stroke="#00f" fill="none"/><path d="M17 3v5M3 13h2M3 16h2" stroke="#000" stroke-width="2"/><path d="M9 18v-4l2-2 1 2v4M9 16h3M18 13h-3v5h3v-2" stroke="#00f" fill="none"/></svg></button>
            <button aria-label="Agilent oscilloscope"><svg class="ic" viewBox="0 0 20 20"><use href="#m-base"/><path d="M1 7l3-4 4 4 3-4 4 4" stroke="#00f" fill="none"/><path d="M1 5l3 4 4-4 3 4 4-4M15 2h5M17 0v5" stroke="#f00" fill="none"/><path d="M1 16h6M3 14v4" stroke="#000"/><path d="M9 18v-4l2-2 1 2v4M9 16h3M18 13h-3v5h3v-2" stroke="#00f" fill="none"/></svg></button>
            <button aria-label="Tektronix oscilloscope"><svg class="ic" viewBox="0 0 20 20"><use href="#m-base"/><path d="M1 7l3-4 4 4 3-4 4 4" stroke="#00f" fill="none"/><path d="M1 5l3 4 4-4 3 4 4-4M15 2h5M17 0v5" stroke="#f00" fill="none"/><path d="M1 16h6M3 14v4" stroke="#000"/><path d="M8 13h5M10 13v5M15 13v5M18 13l-3 3 3 2" stroke="#00f" fill="none"/></svg></button>
            <hr>
            <button aria-label="LabVIEW instruments"><svg class="ic" viewBox="0 0 20 20"><path d="M1 3h18v14H1z" fill="#022"/><path d="M1 2h18M1 18h18" stroke="#888" stroke-width="2" stroke-dasharray="2 1"/><path d="M4 4v12M13 4v12M16 4v12" stroke="#088"/><path d="M6 4v12l8-6z" fill="#fe0"/><path d="M0 7h5M14 10h6" stroke="#f00" stroke-width="2"/><path d="M0 13h5" stroke="#00f" stroke-width="2"/></svg></button>
            <svg class="more" viewBox="0 0 8 8"><path d="M2 0v8l4-4z"/></svg>
            <hr>
            <button aria-label="ELVISmx instruments"><svg class="ic gray" viewBox="0 0 20 20"><path d="M1 6l6 1 4 6 4-3 4-5M3 9l5 5 3 3M8 14l6-6-3-4 5 2M14 13l5-1" /></svg></button>
            <svg class="more off" viewBox="0 0 8 8"><path d="M2 0v8l4-4z"/></svg>
            <hr>
            <button aria-label="Current clamp"><svg class="ic" viewBox="0 0 20 20"><path d="M8 11l4-9h3l2 3 2-1" stroke="#000" fill="none"/><path d="M8 11l3-6" stroke="#000" stroke-width="3"/><circle cx="5" cy="14" r="5" fill="#800"/><path d="M2 14h6M5 11v6" stroke="#fff" stroke-width="2"/><path d="M10 15h10" stroke="#f00"/></svg></button>
        </aside>
    </main>

    <section class="output">
        <div class="outside">
            <button class="raised" aria-label="Close view"><svg viewBox="0 0 12 12"><path d="M2 3l8 7M10 3l-8 7" stroke="#000" stroke-width="2"/></svg></button>
            <button class="raised" aria-label="Collapse view"><svg viewBox="0 0 12 12"><path d="M4 3v7l4-4z" fill="#aaa"/></svg></button>
            <h2>Spreadsheet View</h2>
        </div>
        <div class="outmain">
            <div class="log">Multisim&nbsp; -&nbsp; среда, 22 марта 2023 г., 14:51:56</div>
            <div class="tabs">
                <button class="tab active">Results</button>
                <button class="tab nets">Nets</button>
                <button class="tab">Components</button>
                <button class="tab">Copper layers</button>
                <button class="tab">Simulation</button>
            </div>
        </div>
    </section>

    <footer class="status">
        <span class="help">For Help, press F1</span>
        <span class="cell">-</span>
        <span class="cell"></span>
        <span class="cell">-</span>
        <span class="prog"><i></i><i></i><i></i><i></i><i></i><i></i><i></i></span>
    </footer>

    <div class="taskbar">
        <button aria-label="Start"><svg viewBox="0 0 20 20"><path d="M0 3l8-1v7H0zM9 2l11-2v9H9zM0 10h8v8l-8-1zM9 10h11v10L9 18z" fill="#fff"/></svg></button>
        <button aria-label="Search"><svg viewBox="0 0 20 20"><circle cx="13" cy="7" r="6" fill="none" stroke="#fff"/><path d="M9 12l-8 8" stroke="#fff"/></svg></button>
        <button aria-label="Opera"><svg class="big" viewBox="0 0 30 30"><path fill-rule="evenodd" d="M15 1a14 14 0 1 0 0 28 14 14 0 1 0 0-28zm0 4c4 0 6 5 6 10s-2 10-6 10-6-5-6-10 2-10 6-10z" fill="#e81224"/></svg></button>
        <button class="run" aria-label="Edge"><svg class="big" viewBox="0 0 30 30"><circle cx="15" cy="15" r="15" fill="#0c63b8"/><path d="M0 14C2-3 28-4 30 13c0 7-8 9-11 6 3-6-2-10-7-9C7 10 1 12 0 18z" fill="#2bb6d6"/><path d="M20 1c6 2 10 7 10 12 0 7-8 9-11 6 2-3 2-7-1-8z" fill="#5fd668"/><path d="M19 20c-4-1-4-8-3-9-5 1-7 12 2 15 5 1 9-2 10-4-3 1-6 0-9-2z" fill="#0a3f86"/><path d="M19 19c3 3 8 2 10-1l-1 4c-4 1-8 0-9-3z" fill="#1d1d1d"/></svg></button>
        <button class="run" aria-label="Word"><svg class="big" viewBox="0 0 30 30"><path d="M3 1h25v27H1V5z" fill="#9fc0ea"/><path d="M2 4h24v17H2z" fill="#e9f3fd"/><path d="M5 6l3 13 5-10 3 10 5-13" stroke="#1c53b0" stroke-width="3" fill="none"/><path d="M21 13l9 4-2 11h-9z" fill="#fff" stroke="#a9c6ea"/></svg></button>
        <button class="run current" aria-label="Multisim"><svg class="big" viewBox="0 0 30 30"><rect x="1" y="1" width="28" height="28" rx="4" fill="#3d3a7c"/><rect x="1" y="1" width="28" height="12" rx="4" fill="#66649c"/><path d="M3 5h16M6 10h8v4h8M3 15h12M13 28v-7M17 28V17M21 28v-8M25 28V17" stroke="#fff" fill="none"/><path d="M20 8h8M22 13h6M2 19h9M2 24h9" stroke="#f0b860"/></svg></button>
        <div class="tray">
            <svg class="weather" viewBox="0 0 32 36"><circle cx="22" cy="13" r="8" fill="#f7981d"/><circle cx="26" cy="4" r="4" fill="#d42a20"/><path d="M7 34a7 7 0 0 1-1-13c1-12 17-13 19-2 9 1 8 15 0 15z" fill="#a9c8fa"/><path d="M7 34a7 7 0 0 1-1-11c6-4 8 3 12 0 6-4 13 0 12 6-1 4-3 5-5 5z" fill="#d7e5fd"/></svg>
            <span class="temp">7°C&nbsp; Mostly cloudy</span>
            <svg viewBox="0 0 20 20"><path d="M4 5h8v10H4zM12 9l3-2v6l-3-2M5 3c2-3 6-3 8 0M5 17c2 3 6 3 8 0"/></svg>
            <svg viewBox="0 0 20 20"><path d="M5 5h13v10H5zM19 8v4"/><path d="M8 7h9v6H8z" fill="#fff"/><path d="M1 2v3h4V2M3 5v6"/></svg>
            <svg viewBox="0 0 20 20"><path d="M1 8h3l4-4v12l-4-4H1zM11 8q2 2 0 4M14 6q3 4 0 8"/><path d="M16 3q5 7 0 14" stroke="#666"/></svg>
            <svg viewBox="0 0 20 20"><circle cx="10" cy="10" r="9"/><ellipse cx="10" cy="10" rx="4" ry="9"/><path d="M1 10h18M3 5h14M3 15h8"/><circle cx="15" cy="15" r="4" fill="#1d1d1d"/><path d="M12 12l6 6"/></svg>
            <span class="lang">ENG</span>
            <span class="clock">15:01<br>22.03.2023</span>
            <svg class="mail" viewBox="0 0 20 20"><path d="M1 1v18" stroke-width="2"/><path d="M6 19V5l5 7 7-9v16" stroke-width="3"/></svg>
            <svg class="note" viewBox="0 0 20 20"><path d="M1 1h18v15h-6l-3 3-3-3H1z"/></svg>
        </div>
    </div>
</body>
</html>
```
FILE: styles.css
```css
*{
    box-sizing: border-box;
}
body{
    margin:0;
    height:100vh;
    display:flex;
    flex-direction: column;
    overflow: hidden;
    background-color: #f0f0f0;
    color:#000;
    font-family: "Open Sans", "Noto Sans", sans-serif;
    font-size: 14px;
    line-height: 20px;
}
button{
    margin:0;
    padding:0;
    border:none;
    background:none;
    color:inherit;
    font:inherit;
    display:flex;
    align-items: center;
    justify-content: center;
}
h2{
    margin:0;
    font-size: 14px;
    font-weight: normal;
}
.defs{
    position: absolute;
}
.ic{
    width:20px;
    height:20px;
    flex:none;
    shape-rendering: crispEdges;
}
.gray{
    fill:none;
    stroke:#a6a6a6;
}
.navy{
    fill:#fff;
    stroke:#000080;
}
.line{
    fill:none;
    stroke:#000;
}
.gl{
    fill:none;
    stroke:#5f8c5c;
    stroke-width:2;
}
.raised{
    width:16px;
    height:16px;
    background-color: #f0f0f0;
    border:1px solid #fff;
    border-right-color: #696969;
    border-bottom-color: #696969;
    box-shadow: inset -1px -1px #a0a0a0;
}
.raised svg{
    width:12px;
    height:12px;
}

/* title and menu */
.titlebar{
    height:29px;
    flex:none;
    display:flex;
    align-items: center;
    background-color: #fff;
    border-bottom:1px solid #a0a0a0;
}
.appicon{
    width:18px;
    height:18px;
    margin:0 7px 0 2px;
}
.winbtns{
    display:flex;
    margin-left:auto;
    padding-right:4px;
}
.winbtns button{
    width:58px;
    height:28px;
}
.winbtns svg{
    width:14px;
    height:14px;
    fill:none;
    stroke:#000;
}
.menubar{
    height:31px;
    flex:none;
    display:flex;
    align-items: center;
    gap:14px;
    padding:0 4px 0 4px;
    border-bottom:1px solid #a0a0a0;
    border-top:1px solid #fff;
}
.menubar > .ic{
    margin-right:-6px;
}
.menubar u{
    text-underline-offset: 2px;
}
.mdibtns{
    display:flex;
    gap:2px;
    margin-left:auto;
    padding-top:4px;
}
.mdibtns .raised{
    width:19px;
    height:19px;
}
.mdibtns svg{
    width:16px;
    height:16px;
    fill:none;
    stroke:#000;
}

/* toolbars */
.toolrow{
    height:32px;
    flex:none;
    display:flex;
}
.toolbar{
    display:flex;
    align-items: center;
    border:1px solid #a0a0a0;
    border-top-color:#fff;
    border-left-color:#fff;
}
.toolbar button{
    width:28px;
    height:26px;
}
.toolbar .on{
    background-color: #f8f8f8;
    border:1px solid #a0a0a0;
    border-right-color: #fff;
    border-bottom-color: #fff;
}
.first{
    padding-left:10px;
    padding-right:2px;
}
.views{
    padding-left:10px;
}
.views button{
    width:29px;
}
.sep{
    width:1px;
    height:25px;
    margin:0 3px 0 4px;
    background-color: #a0a0a0;
    box-shadow: 1px 0 #fff;
}
.views .sep:first-of-type{
    margin:0 2px;
}
.drop{
    width:7px;
    height:8px;
    margin:0 3px 0 2px;
}
.inuse{
    appearance:none;
    width:186px;
    height:25px;
    padding:0 4px;
    border:1px solid #adadad;
    border-radius: 0;
    background:#e1e1e1 url("data:image/svg+xml,%3Csvg xmlns='http://www.w3.org/2000/svg' width='10' height='8'%3E%3Cpath d='M1 2l4 4 4-4' fill='none' stroke='%23555'/%3E%3C/svg%3E") right 5px center no-repeat;
    color:#000;
    font:13px "Open Sans", "Noto Sans", sans-serif;
}
.zoombar{
    margin-left:auto;
    margin-right:410px;
    padding-left:11px;
    padding-right:2px;
}
.misc{
    font-family: "Liberation Mono", monospace;
    font-size: 9px;
    font-weight: bold;
}
.sim{
    width:267px;
    padding-left:10px;
}
.toolbar .mode{
    width:auto;
    gap:3px;
    padding:0 0 2px 3px;
}
.mode svg{
    width:14px;
    height:14px;
}
.probes{
    padding-left:10px;
    padding-right:2px;
}

/* middle part */
.main{
    flex:1;
    min-height:0;
    display:flex;
    border-top:1px solid #a0a0a0;
}
.dock{
    width:193px;
    flex:none;
    display:flex;
    flex-direction: column;
    padding:3px 5px 4px 3px;
    border-right:1px solid #a0a0a0;
    border-bottom:1px solid #a0a0a0;
    margin-bottom:4px;
}
.dockhead{
    display:flex;
    align-items: center;
    gap:2px;
}
.dockhead h2{
    width:146px;
    padding:2px 3px 3px;
    margin-right:2px;
    background:linear-gradient(90deg,#bfcddb,#d7e4f2);
}
.dockbody{
    flex:1;
    min-height:0;
    margin-top:3px;
    display:flex;
    flex-direction: column;
    border:1px solid #fff;
    border-right:2px solid #808080;
    border-bottom:2px solid #696969;
}
.docktools{
    display:flex;
    height:30px;
    flex:none;
}
.docktools button{
    width:30px;
    height:32px;
}
.tree{
    flex:1;
    margin:0 1px 1px 0;
    border:1px solid #828790;
    background-color: #fff;
}
.tree, .tree ul{
    padding:2px 0 0 9px;
    list-style: none;
}
.tree ul{
    margin:0 0 0 22px;
    padding:0;
}
.tree > li > .ic{
    margin:0 5px 0 8px;
}
.tree .ic{
    vertical-align: middle;
}
.tree li{
    line-height: 22px;
}
.tree ul li::before{
    content:"";
    display:inline-block;
    width:12px;
    height:12px;
    margin:0 3px 0 4px;
    border:1px dotted #808080;
    border-top:none;
    border-right:none;
    vertical-align: 4px;
}
.tree ul .ic{
    margin-right:3px;
}
.sel{
    display:inline-block;
    padding:0 2px;
    background-color: #f0f0f0;
}
.minus{
    display:inline-block;
    width:11px;
    height:11px;
    border:1px solid #999;
    vertical-align: -1px;
    background:linear-gradient(#3c5a96,#3c5a96) center/7px 1px no-repeat #eee;
}
.tabs{
    display:flex;
    align-items: flex-start;
    gap:1px;
    font-size: 12px;
    line-height: 18px;
}
.tab{
    height:22px;
    padding:0 4px 0 5px;
    border:1px solid #fff;
    border-top:none;
    border-right:2px solid #696969;
    border-bottom:2px solid #808080;
    border-radius: 0 0 2px 2px;
}
.tabs .active{
    height:24px;
    padding:3px 4px 0 5px;
    margin-right:-1px;
    background-color: #f0f0f0;
}
.docktabs .tab{
    padding-right:5px;
}
.docktabs .cut{
    width:18px;
    padding-right:0;
    border-right:none;
}
.arrow{
    width:19px;
    height:19px;
    margin-top:3px;
    margin-right:-1px;
    border:1px solid #adadad;
}
.arrow svg, .more{
    width:8px;
    height:8px;
}
.work{
    flex:1;
    min-width:0;
    margin-left:5px;
    display:flex;
    flex-direction: column;
}
.frame{
    flex:1;
    min-height:0;
    display:flex;
    padding:2px 6px 6px 3px;
    border:1px solid #696969;
}
.canvas{
    flex:1;
    min-width:0;
    overflow: hidden;
    background-color: #ababab;
    border-left:2px solid #696969;
    border-top:2px solid #696969;
    padding:97px 0 0 88px;
}
.vscroll{
    width:20px;
    display:flex;
    flex-direction: column;
    background-color: #f0f0f0;
    border-left:1px solid #fff;
    border-top:2px solid #696969;
}
.vscroll svg{
    width:19px;
    height:21px;
    fill:none;
    stroke:#606060;
    stroke-width:2;
}
.thumb{
    flex:0 0 68%;
    background-color: #cdcdcd;
}
.vscroll .down{
    margin-top:auto;
}
.doctabs{
    height:32px;
    flex:none;
    display:flex;
    justify-content: space-between;
    padding:0 2px 0 3px;
}
.doctab{
    height:29px;
    gap:3px;
    margin-top:-1px;
    padding:3px 3px 0 3px;
    background-color: #f0f0f0;
    border:1px solid #fff;
    border-top:none;
    border-right:2px solid #000;
    border-bottom:2px solid #000;
    border-radius: 0 0 3px 3px;
}
.cascade{
    width:17px;
    height:17px;
    margin-top:7px;
}
.instruments{
    width:32px;
    height:613px;
    flex:none;
    display:flex;
    flex-direction: column;
    align-items: center;
    padding-top:11px;
    border-right:1px solid #a0a0a0;
    border-bottom:1px solid #a0a0a0;
}
.instruments button{
    height:26px;
    flex:none;
}
.instruments hr{
    width:27px;
    margin:3px 0;
    border:none;
    border-top:1px solid #a0a0a0;
    border-bottom:1px solid #fff;
}
.more{
    flex:none;
    margin:3px 0 5px;
    height:6px;
}
.off{
    fill:#a6a6a6;
}

/* schematic */
.sheet{
    display:block;
    width:1080px;
    height:560px;
    box-shadow: 0 0 14px 5px #333;
}
.dots{
    fill:none;
    stroke:#000;
    stroke-dasharray: 1 9 1 9 1 9 1 10 1 9 1 9 1 9 1 9 1 9 1 9 1 9 1 10 1 9 1 9 1 9;
    shape-rendering: crispEdges;
}
.ruler, .red, .blk, .blue, .orange{
    fill:none;
    shape-rendering: crispEdges;
}
.ruler{
    stroke:#808080;
}
.red{
    stroke:#f00;
}
.orange{
    stroke:#ff8000;
}
.blk{
    stroke:#000;
}
.blue{
    stroke:#00f;
}
.thin{
    shape-rendering: auto;
}
.marks{
    fill:#808080;
    font:10px "Liberation Sans", sans-serif;
    text-anchor: middle;
}
.lbl{
    font:bold 15px "Liberation Sans", Arial, sans-serif;
}
.net{
    font-weight: normal;
    stroke:#000;
    stroke-width:0.5;
}
.part{
    fill:#00f;
}
.pin{
    fill:#55f;
    font:10px "Liberation Mono", monospace;
}
.xsc{
    font:15px "Liberation Serif", serif;
    stroke:#000;
    stroke-width:0.3;
}
.tiny{
    font:8px "Liberation Sans", sans-serif;
}

/* spreadsheet view */
.output{
    height:179px;
    flex:none;
    display:flex;
    border-top:1px solid #696969;
    border-bottom:1px solid #a0a0a0;
}
.outside{
    width:28px;
    flex:none;
    display:flex;
    flex-direction: column;
    align-items: center;
    gap:2px;
    padding:2px 1px 4px 2px;
}
.outside h2{
    flex:1;
    width:25px;
    line-height: 18px;
    padding:3px 0 0 7px;
    writing-mode: vertical-rl;
    transform: rotate(180deg);
    background:linear-gradient(#bfcddb,#d7e4f2);
}
.outmain{
    flex:1;
    display:flex;
    flex-direction: column;
    padding:6px 8px 3px 4px;
}
.log{
    flex:1;
    padding:4px 27px;
    background-color: #fff;
    border:1px solid #828790;
    box-shadow: 1px 1px #f0f0f0, 2px 2px #808080;
    margin-bottom:2px;
}
.tabs .nets{
    padding-right:16px;
}

/* status line */
.status{
    height:24px;
    flex:none;
    display:flex;
    align-items: center;
    padding:2px 2px 0;
    border-top:1px solid #d7d7d7;
}
.help{
    flex:1;
}
.cell{
    width:183px;
    height:22px;
    padding-left:4px;
    border-left:1px solid #d7d7d7;
}
.help + .cell{
    width:148px;
    padding-left:0;
    border-left:none;
}
.prog{
    display:flex;
    gap:1px;
    padding:2px 3px 2px 4px;
    border-left:1px solid #d7d7d7;
}
.prog i{
    width:7px;
    height:14px;
    border:1px solid #a0a0a0;
    border-right-color: #fff;
    border-bottom-color: #fff;
}

/* taskbar */
.taskbar{
    height:50px;
    flex:none;
    display:flex;
    background-color: #1d1d1d;
    color:#fff;
}
.taskbar button{
    width:61px;
    border-bottom:3px solid transparent;
}
.taskbar button svg{
    width:20px;
    height:20px;
}
.taskbar button .big{
    width:30px;
    height:30px;
}
.taskbar .run{
    width:51px;
    margin:0 5px 0 8px;
    border-bottom-color: #76b9ed;
}
.taskbar .run + .run{
    margin-left:6px;
}
.taskbar .run + .current{
    width:61px;
    background-color: #4a4a4a;
    margin-left:1px;
}
.tray{
    margin-left:auto;
    display:flex;
    align-items: center;
    gap:10px;
    padding-right:31px;
}
.tray svg{
    width:20px;
    height:20px;
    fill:none;
    stroke:#fff;
}
.tray .weather{
    width:32px;
    height:36px;
    stroke:none;
}
.temp{
    font-size: 17px;
    margin-right:13px;
}
.clock{
    width:84px;
    line-height: 23px;
    text-align: center;
}
.tray .mail{
    margin:0 26px 0 11px;
}
```
